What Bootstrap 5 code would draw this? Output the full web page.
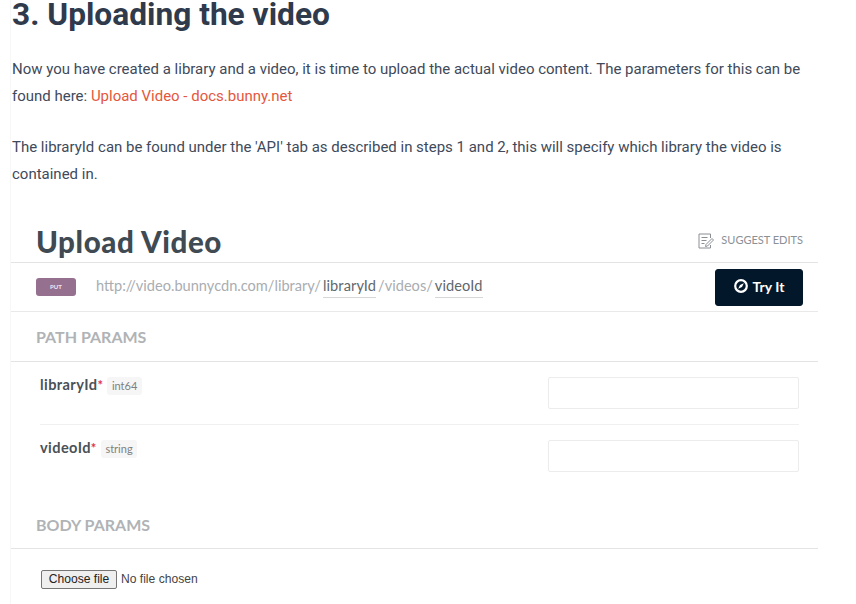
<!DOCTYPE html>
<html lang="en">
<head>
<meta charset="utf-8">
<title>Uploading the video</title>
<link href="https://cdn.jsdelivr.net/npm/bootstrap@5.3.0/dist/css/bootstrap.min.css" rel="stylesheet">
<style>
html, body { height: 604px; overflow: hidden; background: #fff; }
body { font-family: Roboto, sans-serif; color: #404a5a; }
.page-wrap { width: 808px; height: 604px; margin-left: 10px; border-left: 1px solid #f7f7f7; overflow: hidden; }
.art-title { font-family: Roboto, sans-serif; font-weight: 700; font-size: 31.700px; line-height: 30px; color: #2f3a4c; margin: 0 0 0 1px; }
.art-text { font-size: 14.990px; line-height: 27px; margin: 26px 0 0 1px; color: #404a5a; }
.art-text + .art-text { margin-top: 24px; }
.art-text a { color: #e4573d; text-decoration: none; }
.shot { margin-top: 33px; font-family: Lato, sans-serif; color: #3f4a52; }
.shot-head { padding: 0 15px 0 25px; height: 42px; border-bottom: 1px solid #e4e4e4; }
.shot-title { font-family: Lato, sans-serif; font-weight: 900; font-size: 29.500px; letter-spacing: .6px; line-height: 42px; margin: 0; color: #3f4a52; }
.suggest { font-size: 11px; color: #8a9096; gap: 6px; margin-top: -2px; }
.url-bar { height: 49px; padding: 0 15px 0 25px; border-bottom: 1px solid #e9e9e9; }
.verb { width: 40px; height: 18px; background: #96708f; border-radius: 3px; color: #f2e6ef; font-size: 6px; font-weight: 700; line-height: 18px; text-align: center; }
.url-text { margin-left: 20px; margin-top: -2px; font-size: 14.600px; color: #a9adb1; gap: 2px; }
.url-var { color: #5f676d; border-bottom: 1px solid #d6d6d6; line-height: 22px; letter-spacing: .1px; }
.try-btn { --bs-btn-bg: #03172b; --bs-btn-hover-bg: #03172b; --bs-btn-border-color: #03172b; --bs-btn-hover-border-color: #03172b; --bs-btn-color: #fff; --bs-btn-hover-color: #fff; width: 88px; height: 37px; padding: 0 0 2px; font-size: 14px; font-weight: 700; border-radius: 3px; gap: 5px; }
.sect-label { font-weight: 700; font-size: 16px; line-height: 20px; color: #b0b3b6; margin: 0; padding-left: 25px; }
.sect-line { border-bottom: 1px solid #e4e4e4; padding-bottom: 14px; }
.sect-first { margin-top: 15px; }
.sect-second { margin-top: 28px; padding-bottom: 13px; }
.param-row { margin-left: 29px; margin-right: 19px; padding: 15px 0; }
.param-row + .param-row { border-top: 1px solid #f0f0f0; }
.param-lead { line-height: 18px; margin-top: -2px; }
.param-name { font-weight: 700; font-size: 14.600px; letter-spacing: .4px; color: #4a5157; }
.req { color: #e0344a; font-size: 13px; }
.param-type { display: inline-block; font-size: 11px; line-height: 14px; color: #808080; background: #f6f6f6; border-radius: 3px; padding: 2px 4.500px; }
.param-input { width: 251px; height: 32px; border: 1px solid #ececec; border-radius: 2px; background: #fff; }
.file-line { font-family: "Liberation Sans", sans-serif; font-size: 12.100px; color: #444; padding: 21px 0 0 30px; gap: 4px; }
.file-btn { width: 76px; height: 19px; padding: 0; font-size: 12.100px; line-height: 17px; color: #222; background: #efefef; border: 1px solid #767676; border-radius: 2px; }
</style>
</head>
<body>
<div class="page-wrap">
  <h2 class="art-title">3. Uploading the video</h2>
  <p class="art-text">Now you have created a library and a video, it is time to upload the actual video content. The parameters for this can be found here: <a href="#">Upload Video - docs.bunny.net</a></p>
  <p class="art-text">The libraryId can be found under the 'API' tab as described in steps 1 and 2, this will specify which library the video is contained in.</p>
  <div class="shot">
    <div class="shot-head d-flex align-items-center justify-content-between">
      <h3 class="shot-title">Upload Video</h3>
      <span class="suggest d-flex align-items-center">
        <svg width="17" height="16" viewBox="0 0 17 16" fill="none" stroke="#8a8f94" stroke-width="1"><path d="M12.500 5V1H1v14h11.500v-3"/><path d="M3.500 4.500h6M3.500 7.500h5M3.500 10.500h3"/><path d="M8 11.500l-.5 2 2-.5 6-6-1.500-1.500z"/></svg>
        SUGGEST EDITS
      </span>
    </div>
    <div class="url-bar d-flex align-items-center">
      <span class="verb">PUT</span>
      <span class="url-text d-flex align-items-center">http://video.bunnycdn.com/library/ <span class="url-var">libraryId</span> /videos/ <span class="url-var">videoId</span></span>
      <button type="button" class="btn try-btn d-inline-flex align-items-center justify-content-center ms-auto">
        <svg width="14" height="14" viewBox="0 0 14 14" fill="none"><circle cx="7" cy="7" r="5.800" stroke="#fff" stroke-width="2.200"/><path d="M9.800 4.200L8 8 4.200 9.800 6 6z" fill="#fff"/></svg>
        Try It
      </button>
    </div>
    <div class="sect-line sect-first"><p class="sect-label">PATH PARAMS</p></div>
    <div class="param-row d-flex justify-content-between">
      <div class="param-lead"><span class="param-name">libraryId<span class="req">*</span></span> <span class="param-type">int64</span></div>
      <div class="param-input"></div>
    </div>
    <div class="param-row d-flex justify-content-between">
      <div class="param-lead"><span class="param-name">videoId<span class="req">*</span></span> <span class="param-type">string</span></div>
      <div class="param-input"></div>
    </div>
    <div class="sect-line sect-second"><p class="sect-label">BODY PARAMS</p></div>
    <div class="file-line d-flex align-items-center"><button type="button" class="file-btn">Choose file</button><span>No file chosen</span></div>
  </div>
</div>
</body>
</html>
